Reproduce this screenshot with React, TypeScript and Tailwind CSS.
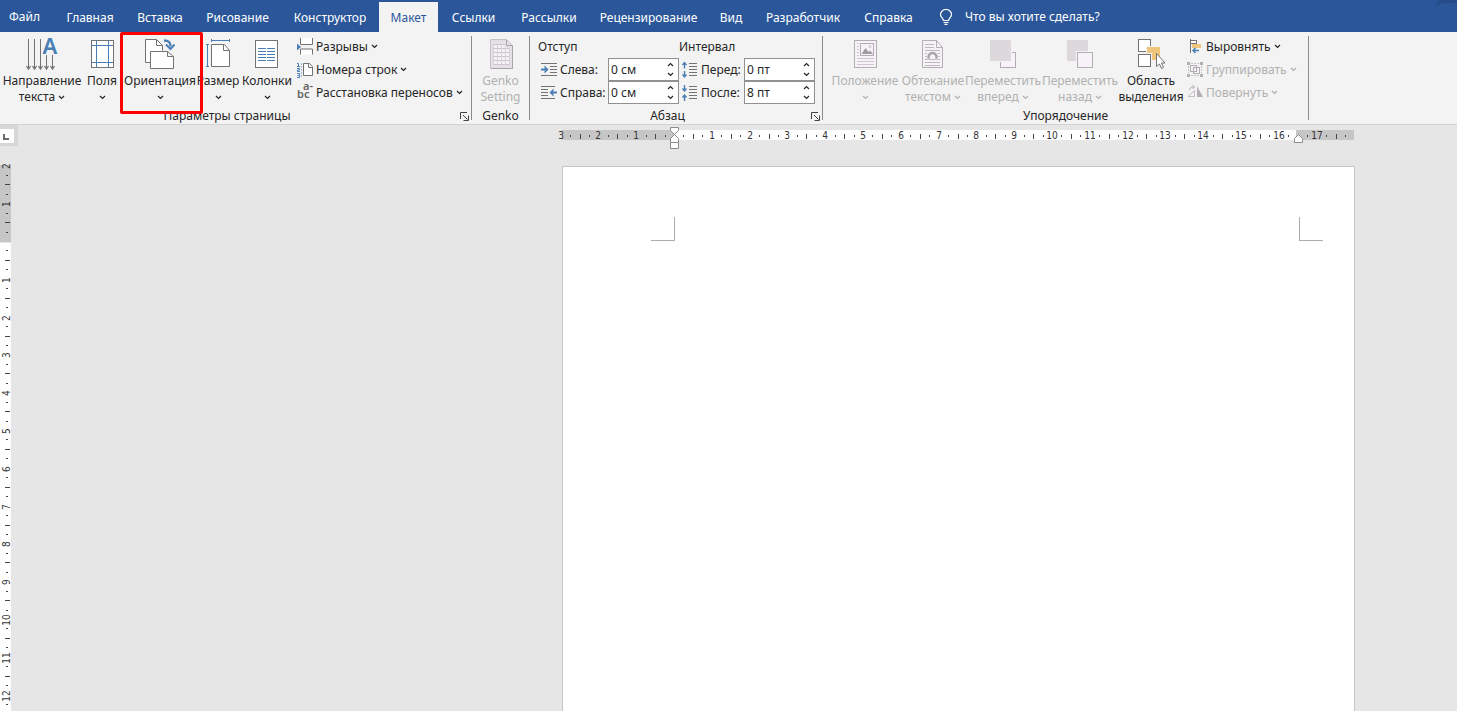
import type { ReactNode } from "react";

const GRAY = "#737373";
const BLUE = "#4a7fb5";
const DIM = "#b3aeb3";

const tabs = [
    { label: "Файл", width: "w-[49px] mr-[5px]" },
    { label: "Главная", width: "w-[72px] pt-0.5" },
    { label: "Вставка", width: "w-[68px] pt-0.5" },
    { label: "Рисование", width: "w-[87px] pt-0.5" },
    { label: "Конструктор", width: "w-[98px] pt-0.5" },
    { label: "Макет", width: "w-[59px] pt-0.5", active: true },
    { label: "Ссылки", width: "w-[71px] pt-0.5" },
    { label: "Рассылки", width: "w-[80px] pt-0.5" },
    { label: "Рецензирование", width: "w-[119px] pt-0.5" },
    { label: "Вид", width: "w-[46px] pt-0.5" },
    { label: "Разработчик", width: "w-[98px] pt-0.5" },
    { label: "Справка", width: "w-[73px] pt-0.5" }
];

function Chevron() {
    return (
        <svg className="w-[7px] h-[5px] shrink-0" viewBox="0 0 7 5" fill="none" stroke="currentColor" strokeWidth="1.2">
            <path d="M1 1l2.5 2.5L6 1" />
        </svg>
    );
}

function Icon({ children }: { children: ReactNode }) {
    return (
        <svg className="w-8 h-8 shrink-0 overflow-visible" viewBox="0 0 32 32" fill="none" stroke={GRAY} aria-hidden="true">
            {children}
        </svg>
    );
}

function SmallIcon({ children }: { children: ReactNode }) {
    return (
        <svg className="w-4 h-4 shrink-0 overflow-visible" viewBox="0 0 16 16" fill="none" stroke={GRAY} aria-hidden="true">
            {children}
        </svg>
    );
}

/* ---------- large icons ---------- */

function TextDirectionIcon() {
    return (
        <Icon>
            <path d="M2.5 1v30M8.5 1v30M14.5 1v30M20.5 17v14M26.5 17v14" />
            <path d="M0.5 28l2 3 2-3M6.5 28l2 3 2-3M12.5 28l2 3 2-3M18.5 28l2 3 2-3M24.5 28l2 3 2-3" strokeWidth="1.3" />
            <text x="24" y="16" textAnchor="middle" fill={BLUE} stroke="none" className="font-['Noto_Sans'] font-semibold text-[22px]">A</text>
        </Icon>
    );
}

function MarginsIcon() {
    return (
        <Icon>
            <rect x="5.5" y="2.5" width="22" height="27" fill="#fff" />
            <path d="M10.5 3v26M22.5 3v26M6 7.5h21M6 24.5h21" stroke={BLUE} />
        </Icon>
    );
}

function OrientationIcon() {
    return (
        <Icon>
            <path d="M6.5 24.5h-5v-23h11l6 6v5" fill="#fff" />
            <path d="M12.5 1.5v6h6" />
            <path d="M6.5 13.5h17l6 5v12h-23z" fill="#fff" />
            <path d="M23.5 13.5v5h6" />
            <path d="M20 2.5c5 0 6.5 2 6.5 6" stroke={BLUE} strokeWidth="2.4" />
            <path d="M22 6.5l4.500 4.500L30.500 6.500" stroke={BLUE} strokeWidth="2" />
        </Icon>
    );
}

function SizeIcon() {
    return (
        <Icon>
            <path d="M9.5 6.5h13l5 6v16h-18z" fill="#fff" />
            <path d="M21.5 6.5v6h6" />
            <path d="M9.5 2.5h18M9.5 1v3M27.5 1v3M5.5 6.5v22M4 6.5h3M4 28.5h3" stroke={BLUE} />
        </Icon>
    );
}

function ColumnsIcon() {
    return (
        <Icon>
            <rect x="4.5" y="2.5" width="22" height="27" fill="#fff" />
            <path d="M7 10.5h8M16 10.5h8M7 13.5h8M16 13.5h8M7 16.5h8M16 16.5h8M7 19.5h8M16 19.5h8M7 22.5h8M16 22.5h8" stroke={BLUE} />
        </Icon>
    );
}

function GenkoIcon() {
    return (
        <Icon>
            <path d="M5.5 1.5h16l6 6v23h-22z" fill="#e4e0e5" stroke="#c6c2c6" />
            <path d="M21.5 1.5v6h6" stroke="#a8a4a8" />
            <path d="M6 30.5h22M27.5 8v23" stroke="#a8a4a8" />
            <path d="M8 6h12v4h5v17H8z" fill="#f5f2f6" stroke="none" />
            <path d="M8 6.5h12M8 10.5h17M8 14.5h17M8 18.5h17M8 22.5h17M8 26.5h17" stroke="#c9c4c9" />
            <path d="M8.5 6v21M12.5 6v21M16.5 6v21M20.5 10v17M24.5 10v17" stroke="#d6d1d6" />
        </Icon>
    );
}

function PositionIcon() {
    return (
        <Icon>
            <rect x="5.5" y="2.5" width="22" height="27" fill="#f7f2f8" stroke={DIM} />
            <path d="M8 5.5h2M8 8.5h2M8 11.5h2M8 14.5h2M8 17.5h2M8 20.5h17M8 23.5h17M8 26.5h17" stroke="#cdc8cd" />
            <rect x="11.5" y="5.5" width="13" height="12" stroke={DIM} />
            <path d="M12.5 16l4-6 3 4 1.5-1.5 3 3.5z" fill="#9f9a9f" stroke="none" />
            <circle cx="21" cy="8.5" r="1.5" fill="#d5d0d5" stroke="none" />
        </Icon>
    );
}

function WrapIcon() {
    return (
        <Icon>
            <path d="M5.5 2.5h14l6 7v20h-20z" fill="#f7f2f8" stroke={DIM} />
            <path d="M19.5 2.5v7h6" stroke={DIM} />
            <path d="M8 6.5h9M8 9.5h9M8 12.5h15M8 15.5h2M21 15.5h2M8 18.5h2M21 18.5h2M8 21.5h15M8 24.5h15M8 27.5h15" stroke="#bdb8bd" />
            <path d="M10 21v-2a5.5 5.5 0 0 1 11 0v2h-3v-2a2.5 2.5 0 0 0-5 0v2z" fill="#a8a3a8" stroke="#f7f2f8" strokeWidth="0.6" />
        </Icon>
    );
}

function ForwardIcon() {
    return (
        <Icon>
            <rect x="13.5" y="14.5" width="15" height="15" fill="#f7f2f8" stroke={DIM} />
            <rect x="2" y="1" width="23" height="23" fill="#f3f3f3" stroke="none" />
            <rect x="3" y="2" width="21" height="21" fill="#ddd8dc" stroke="none" />
        </Icon>
    );
}

function BackwardIcon() {
    return (
        <Icon>
            <rect x="3" y="2" width="21" height="21" fill="#ddd8dc" stroke="none" />
            <rect x="12" y="13" width="17" height="17" fill="#f3f3f3" stroke="none" />
            <rect x="13.5" y="14.5" width="15" height="15" fill="#f7f2f8" stroke={DIM} />
        </Icon>
    );
}

function SelectionIcon() {
    return (
        <Icon>
            <rect x="3.5" y="1.5" width="12" height="12" fill="#fff" />
            <rect x="3.5" y="16.5" width="12" height="12" fill="#fff" />
            <path d="M11 8h15v15H17v-7h-6z" fill="#f3f3f3" stroke="none" />
            <path d="M12 9h13v13h-8v-7h-5z" fill="#efc57b" stroke="none" />
            <path d="M21.5 15.5v13l3-2.5 2 4.5 2-1-2-4.500h3.500z" fill="#fff" />
        </Icon>
    );
}

/* ---------- small icons ---------- */

function BreaksIcon() {
    return (
        <SmallIcon>
            <path d="M3.5 -1v6.5h12V-1M3.5 15.5v-5.500h12v5.500" fill="#fff" />
            <path d="M0 4.5l4 3.500-4 3.500z" fill={BLUE} stroke="none" />
        </SmallIcon>
    );
}

function LineNumbersIcon() {
    return (
        <SmallIcon>
            <path d="M6.5 1.5h6l3 3v9h-9z" fill="#fff" />
            <path d="M11.5 1.5v4h4" />
            <path d="M0 1.5h1.5v3M0 4.5h3M0 6.5h2.500v1.500H0.500v1.500H3M0 11.500h2.500v4H0M0.500 13.500h2" stroke={BLUE} />
            <path d="M4.5 1.5v14" stroke={BLUE} strokeDasharray="1 2" />
        </SmallIcon>
    );
}

function HyphenationIcon() {
    return (
        <SmallIcon>
            <text y="13" fill="#666" stroke="none" className="font-['Noto_Sans'] font-semibold text-[11px]">
                bc<tspan x="6" y="5">a-</tspan>
            </text>
        </SmallIcon>
    );
}

function IndentLeftIcon() {
    return (
        <SmallIcon>
            <path d="M0 1.5h16M9 4.5h7M9 7.5h7M9 10.5h7M0 13.5h16" />
            <path d="M0 7.5h5" stroke={BLUE} strokeWidth="2" />
            <path d="M3.5 3.5l4 4-4 4v-2.500l1-1.500-1-1.500z" fill={BLUE} stroke="none" />
        </SmallIcon>
    );
}

function IndentRightIcon() {
    return (
        <SmallIcon>
            <path d="M0 1.5h14M0 4.5h7M0 7.5h7M0 10.5h7M0 13.5h14" />
            <path d="M16 7.5h-5" stroke={BLUE} strokeWidth="2" />
            <path d="M12.5 3.5l-4 4 4 4v-2.500l-1-1.500 1-1.500z" fill={BLUE} stroke="none" />
        </SmallIcon>
    );
}

function SpaceBeforeIcon() {
    return (
        <SmallIcon>
            <path d="M2.5 6.5V0.500M0.500 3l2-2.500 2 2.500M2.500 9v6M0.500 12.500l2 2.500 2-2.500" stroke={BLUE} strokeWidth="1.4" />
            <path d="M7 1.5h8M7 4.5h8M7 7.5h8M7 10.5h8M7 13.5h8" />
        </SmallIcon>
    );
}

function SpaceAfterIcon() {
    return (
        <SmallIcon>
            <path d="M2.5 0v6M0.5 3.5l2 2.500 2-2.500M2.500 16v-6M0.500 12.500l2-2.500 2 2.500" stroke={BLUE} strokeWidth="1.4" />
            <path d="M7 1.5h8M7 4.5h8M7 7.5h8M7 10.5h8M7 13.5h8" />
        </SmallIcon>
    );
}

function AlignIcon() {
    return (
        <SmallIcon>
            <path d="M3.5 0v14" />
            <rect x="3.5" y="1.5" width="6" height="3" fill="#fff" />
            <rect x="5" y="5" width="9" height="4" fill="#efc57b" stroke="none" />
            <path d="M12 11.5H6M8.500 9l-2.500 2.500L8.500 14" stroke={BLUE} strokeWidth="1.5" />
        </SmallIcon>
    );
}

function GroupIcon() {
    return (
        <SmallIcon>
            <path d="M4 1.5h8M4 13.5h8M1.5 4v7M14.5 4v7" stroke="#c4bfc4" strokeDasharray="2 1" />
            <rect x="3.5" y="3.5" width="6" height="6" stroke={DIM} />
            <rect x="6.5" y="5.5" width="6" height="6" stroke={DIM} />
            <path d="M0 0h3v3H0zM13 0h3v3h-3zM0 12h3v3H0zM13 12h3v3h-3z" fill={DIM} stroke="none" />
        </SmallIcon>
    );
}

function RotateIcon() {
    return (
        <SmallIcon>
            <path d="M1 11.5l6.500-6v6z" stroke="#c4bfc4" />
            <path d="M10 1l6 11h-6z" fill={DIM} stroke="none" />
            <path d="M2.5 5c0-2 1.500-3 4.500-3M5.500 0l2 2-2 2" stroke={DIM} />
        </SmallIcon>
    );
}

/* ---------- ribbon parts ---------- */

type BigButtonProps = {
    icon: ReactNode;
    lines: string[];
    width: string;
    disabled?: boolean;
    menu?: boolean;
};

function BigButton({ icon, lines, width, disabled, menu = true }: BigButtonProps) {
    return (
        <button type="button" disabled={disabled} className={`${width} shrink-0 flex flex-col items-center pt-1.5 whitespace-nowrap disabled:text-[#b1b1b1]`}>
            {icon}
            <span className="mt-[3px] h-4">{lines[0]}</span>
            <span className="h-4 flex items-center gap-[3px]">
                {lines[1]}
                {menu && <Chevron />}
            </span>
        </button>
    );
}

function SmallButton({ icon, label, disabled }: { icon: ReactNode; label: string; disabled?: boolean }) {
    return (
        <button type="button" disabled={disabled} className="h-[23px] flex items-center gap-[3px] whitespace-nowrap disabled:text-[#b1b1b1]">
            {icon}
            <span>{label}</span>
            <Chevron />
        </button>
    );
}

function Launcher({ label }: { label: string }) {
    return (
        <button type="button" aria-label={label} className="w-[22px] pr-0.5 flex items-center justify-end">
            <svg className="w-[9px] h-[9px]" viewBox="0 0 9 9" fill="none" stroke="#444">
                <path d="M0.5 7V0.5H7M3 3l4.500 4.500M8.500 3.500v5h-5" />
            </svg>
        </button>
    );
}

function Group({ title, width, launcher, children }: { title: string; width: string; launcher?: boolean; children: ReactNode }) {
    return (
        <>
            <section aria-label={title} className={`${width} shrink-0 flex flex-col`}>
                <div className="h-[76px] flex">{children}</div>
                <div className="h-4 flex">
                    {launcher && <span className="w-[5px]" />}
                    <h2 className="flex-1 text-center">{title}</h2>
                    {launcher && <Launcher label={title} />}
                </div>
            </section>
            <div className="w-px my-1 shrink-0 bg-[#8c8c8c]" />
        </>
    );
}

type SpinFieldProps = { id: string; icon: ReactNode; label: string; value: string; labelWidth: string };

function SpinField({ id, icon, label, value, labelWidth }: SpinFieldProps) {
    return (
        <div className="h-[23px] flex items-center">
            {icon}
            <label htmlFor={id} className={`${labelWidth} pl-[3px] shrink-0 whitespace-nowrap`}>{label}</label>
            <div className="w-[71px] h-[23px] shrink-0 flex border border-[#919191] bg-white">
                <input id={id} defaultValue={value} className="w-0 flex-1 pl-0.5 outline-none" />
                <div className="w-4 flex flex-col items-center justify-between py-0.5">
                    <button type="button" aria-label={`${label} больше`} className="h-2 flex items-center rotate-180"><Chevron /></button>
                    <button type="button" aria-label={`${label} меньше`} className="h-2 flex items-center"><Chevron /></button>
                </div>
            </div>
        </div>
    );
}

/* ---------- rulers ---------- */

// pixels per centimetre at 100% zoom
const CM = 37.8;

function marks(from: number, to: number) {
    const list: { pos: number; kind: number; n: number }[] = [];
    for (let q = from; q <= to; q++) {
        if (q === 0) continue;
        list.push({ pos: Math.round((q * CM) / 4), kind: Math.abs(q) % 4, n: Math.abs(q) / 4 });
    }
    return list;
}

function HorizontalRuler() {
    return (
        <svg className="w-[800px] h-[25px] -ml-1 overflow-visible" viewBox="-116 0 800 25" aria-hidden="true">
            <rect x="-112" y="5" width="792" height="10" fill="#c6c6c6" />
            <rect x="0" y="5" width="622" height="10" fill="#fff" />
            {marks(-12, 71).map(({ pos, kind, n }) =>
                kind === 0 ? (
                    <text key={pos} x={pos} y="14" textAnchor="middle" fill="#333" className="font-['DejaVu_Sans_Condensed'] text-[10px]">{n}</text>
                ) : (
                    <rect key={pos} x={pos} y={kind === 2 ? 9 : 10} width="1" height={kind === 2 ? 5 : 2} fill="#444" />
                )
            )}
            <path d="M-3.5 2.5h8v3l-4 4-4-4zM-3.5 17.5v-4l4-4 4 4v4zM-3.5 17.5h8v6h-8z" fill="#fff" stroke="#8c8c8c" />
            <path d="M620.5 17.5v-4l4-4 4 4v4z" fill="#fff" stroke="#8c8c8c" />
        </svg>
    );
}

function VerticalRuler() {
    return (
        <div className="flex-1 min-h-0 overflow-hidden">
            <svg className="w-3 h-[1000px]" viewBox="0 -79 12 1000" aria-hidden="true">
                <rect x="0" y="-77" width="11" height="77" fill="#c6c6c6" />
                <rect x="0" y="1" width="11" height="1000" fill="#fff" />
                {marks(-8, 83).map(({ pos, kind, n }) =>
                    kind === 0 ? (
                        <text key={pos} x="10" y={pos} textAnchor="middle" transform={`rotate(-90 10 ${pos})`} fill="#333" className="font-['DejaVu_Sans_Condensed'] text-[10px]">{n}</text>
                    ) : (
                        <rect key={pos} x={kind === 2 ? 5 : 6} y={pos - 1} width={kind === 2 ? 5 : 2} height="1" fill="#444" />
                    )
                )}
            </svg>
        </div>
    );
}

export default function App() {
    return (
        <div className="h-screen flex flex-col overflow-hidden bg-[#e6e6e6] font-['Noto_Sans',sans-serif] text-xs leading-4 text-[#262626]">
            <header className="h-8 shrink-0 flex items-end bg-[#2b579a] text-white">
                <nav className="flex items-end">
                    {tabs.map((tab) => (
                        <button
                            key={tab.label}
                            type="button"
                            className={`${tab.width} h-[30px] shrink-0 flex items-center justify-center whitespace-nowrap ${tab.active ? "bg-[#f3f3f3] text-[#2b579a]" : ""}`}
                        >
                            {tab.label}
                        </button>
                    ))}
                </nav>
                <button type="button" className="h-[30px] ml-3.5 flex items-center gap-3 whitespace-nowrap">
                    <svg className="w-[14px] h-4" viewBox="0 0 14 16" fill="none" stroke="#fff" strokeWidth="1.2">
                        <path d="M4.5 11.5c0-2-3-3-3-6a5.500 5 0 0 1 11 0c0 3-3 4-3 6zM4.500 13.500h5M5.500 15.400h3" />
                    </svg>
                    Что вы хотите сделать?
                </button>
                <svg className="w-[22px] h-2 ml-auto self-start" viewBox="0 0 22 8" aria-hidden="true">
                    <path d="M0 7C1 4 3 1 4 0h18v3H12C7 3 3 4 0 7z" fill="#264d88" />
                </svg>
            </header>

            <div className="shrink-0 flex bg-[#f3f3f3] border-b border-[#d2d2d2]">
                <Group title="Параметры страницы" width="w-[471px]" launcher>
                    <div className="flex pl-0.5">
                        <BigButton icon={<TextDirectionIcon />} lines={["Направление", "текста"]} width="w-[80px]" />
                        <BigButton icon={<MarginsIcon />} lines={["Поля", ""]} width="w-[40px]" />
                        <div className="relative flex">
                            <BigButton icon={<OrientationIcon />} lines={["Ориентация", ""]} width="w-[76px]" />
                            {/* Highlight frame around the orientation command */}
                            <div className="absolute -left-0.5 top-0 w-[83px] h-[82px] border-3 border-[#ff0000] rounded-xs pointer-events-none z-10" />
                        </div>
                        <BigButton icon={<SizeIcon />} lines={["Размер", ""]} width="w-[40px]" />
                        <BigButton icon={<ColumnsIcon />} lines={["Колонки", ""]} width="w-[58px]" />
                    </div>
                    <div className="flex flex-col pl-px pt-[3px]">
                        <SmallButton icon={<BreaksIcon />} label="Разрывы" />
                        <SmallButton icon={<LineNumbersIcon />} label="Номера строк" />
                        <SmallButton icon={<HyphenationIcon />} label="Расстановка переносов" />
                    </div>
                </Group>

                <Group title="Genko" width="w-[57px]">
                    <BigButton icon={<GenkoIcon />} lines={["Genko", "Setting"]} width="w-[57px]" menu={false} disabled />
                </Group>

                <Group title="Абзац" width="w-[292px]" launcher>
                    <div className="w-[149px] shrink-0 flex flex-col pl-[11px] pt-[3px]">
                        <h3 className="h-[23px] -ml-[3px] flex items-center">Отступ</h3>
                        <SpinField id="indent-left" icon={<IndentLeftIcon />} label="Слева:" value="0 см" labelWidth="w-[51px]" />
                        <SpinField id="indent-right" icon={<IndentRightIcon />} label="Справа:" value="0 см" labelWidth="w-[51px]" />
                    </div>
                    <div className="flex flex-col pl-[3px] pt-[3px]">
                        <h3 className="h-[23px] -ml-[3px] flex items-center">Интервал</h3>
                        <SpinField id="space-before" icon={<SpaceBeforeIcon />} label="Перед:" value="0 пт" labelWidth="w-[46px]" />
                        <SpinField id="space-after" icon={<SpaceAfterIcon />} label="После:" value="8 пт" labelWidth="w-[46px]" />
                    </div>
                </Group>

                <Group title="Упорядочение" width="w-[485px]">
                    <div className="flex pl-[7px]">
                        <BigButton icon={<PositionIcon />} lines={["Положение", ""]} width="w-[70px]" disabled />
                        <BigButton icon={<WrapIcon />} lines={["Обтекание", "текстом"]} width="w-[66px]" disabled />
                        <BigButton icon={<ForwardIcon />} lines={["Переместить", "вперед"]} width="w-[74px]" disabled />
                        <BigButton icon={<BackwardIcon />} lines={["Переместить", "назад"]} width="w-[80px]" disabled />
                        <BigButton icon={<SelectionIcon />} lines={["Область", "выделения"]} width="w-[62px]" menu={false} />
                    </div>
                    <div className="flex flex-col pl-[5px] pt-[3px]">
                        <SmallButton icon={<AlignIcon />} label="Выровнять" />
                        <SmallButton icon={<GroupIcon />} label="Группировать" disabled />
                        <SmallButton icon={<RotateIcon />} label="Повернуть" disabled />
                    </div>
                </Group>
            </div>

            <main className="flex-1 min-h-0 flex">
                <div className="w-[18px] shrink-0 flex flex-col">
                    <button type="button" aria-label="Табуляция" className="h-[21px] mb-[17px] pt-1 pb-[3px] pr-1 bg-[#d6d6d6]">
                        <svg className="w-[14px] h-[14px] bg-white" viewBox="0 0 14 14" fill="none" stroke="#6b6b6b" strokeWidth="2">
                            <path d="M4 5v5h5" />
                        </svg>
                    </button>
                    <VerticalRuler />
                </div>
                <div className="flex-1 grid grid-cols-[544fr_793px_102fr]">
                    <div className="col-start-2 flex flex-col">
                        <HorizontalRuler />
                        <article className="flex-1 mt-4 pt-[50px] px-[88px] flex justify-between items-start bg-white border border-b-0 border-[#c6c6c6]">
                            <span className="w-6 h-6 border-r border-b border-[#ababab]" />
                            <span className="w-6 h-6 border-l border-b border-[#ababab] -mr-[57px]" />
                        </article>
                    </div>
                </div>
            </main>
        </div>
    );
}
